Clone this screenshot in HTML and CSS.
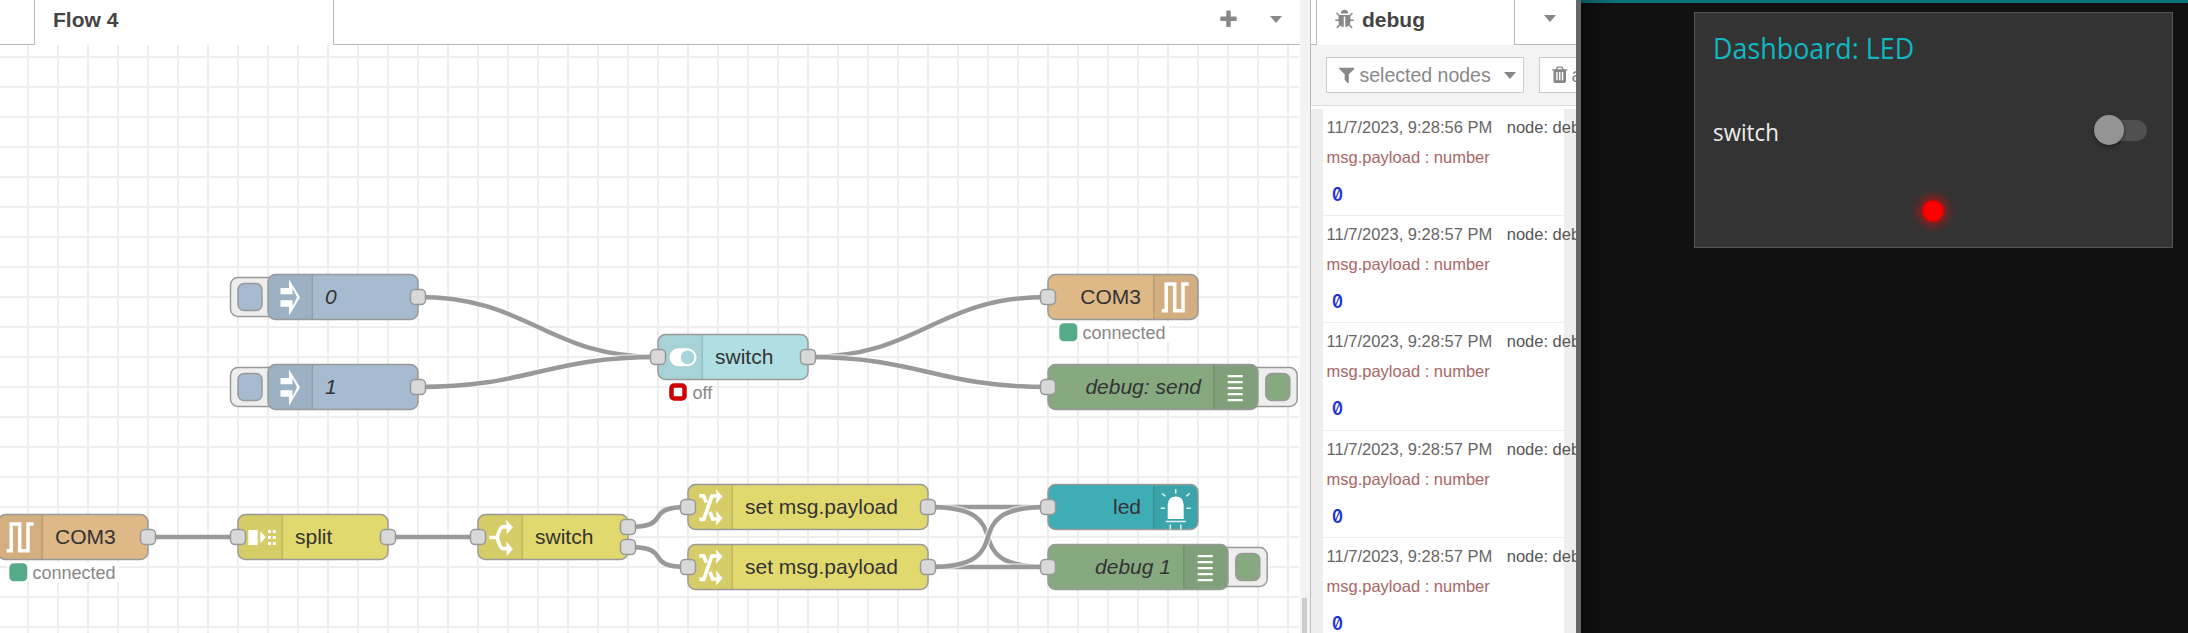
FILE: index.html
```html
<!DOCTYPE html>
<html lang="en">
<head>
<meta charset="utf-8">
<title>Flow 4</title>
<link rel="stylesheet" href="styles.css">
</head>
<body>
<div class="app">
  <main class="workspace">
    <div class="tabbar">
      <div class="tab-gap"></div>
      <div class="tab flow-tab">Flow 4</div>
      <div class="tab-tools">
        <svg class="fa plus" viewBox="0 0 1792 1792"><path d="M1600 736v192q0 40-28 68t-68 28h-416v416q0 40-28 68t-68 28h-192q-40 0-68-28t-28-68v-416h-416q-40 0-68-28t-28-68v-192q0-40 28-68t68-28h416v-416q0-40 28-68t68-28h192q40 0 68 28t28 68v416h416q40 0 68 28t28 68z"/></svg>
        <i class="caret"></i>
      </div>
    </div>
    <svg class="canvas" width="1299" height="588" viewBox="0 45 1299 588">
      <defs>
        <pattern id="grid" x="27" y="56" width="30" height="30" patternUnits="userSpaceOnUse">
          <path class="grid-line" d="M0 0H30V2H2V30H0Z"/>
        </pattern>
        <rect id="port" class="port" x="-7.5" y="-7.5" width="15" height="15" rx="4.5"/>
        <path id="i-inject" class="glyph" d="M12.5-9H21V-17.5L32 .3 21 18.7V9.7H12.5V3.3H24.5V9.5L29 .3 24.5-9V-2.7H12.5Z"/>
        <path id="i-serial" class="wave" d="M8.7 13.7H13.2V-13H21.7V13.7H30V-13H35.7"/>
        <path id="i-debug" class="glyph" d="M14.7-12h15v2.2h-15zM14.7-6h15v2.2h-15zM14.7 0h15v2.2h-15zM14.7 6h15v2.2h-15zM14.7 12h15v2.2h-15z"/>
        <path id="i-split" class="glyph" d="M10.3-7h9.4V8H10.3ZM22.3-5.7 27.9.3 22.3 6.3ZM30-7h3v3h-3zM34.8-7h3v3h-3zM30-1h3v3h-3zM34.8-1h3v3h-3zM30 5h3v3h-3zM34.8 5h3v3h-3z"/>
        <g id="i-switch">
          <path class="branch" d="M11.3 .5H19.2Q22-9.5 24.6-10.2H30M19.2 .5Q22 11 24.6 11.7H30"/>
          <path class="glyph" d="M27.8-17.6 35-9.8 28.4-2.6 29-10ZM27.8 4.2 35 11.9 28.4 19.2 29 11.7Z"/>
        </g>
        <g id="i-change">
          <path class="branch" d="M11.3 12.3H15.8L23.8-11H29M11.3-11.2H15.6L18.3-4.5M22 5 24.6 12H29"/>
          <path class="glyph" d="M27.8-17.8 34.6-10.6 27.8-3 28.8-10.6ZM27.8 3.4 34.6 11.2 27.8 18.8 28.8 11.2Z"/>
        </g>
        <g id="i-led">
          <path class="glyph" d="M14.7 12V-2Q15.2-10.4 22.7-10.4T30.7-2V12Z"/>
          <path class="ray" d="M12.8 14.6H32.8M17.3 17.5V22.4M27.8 17.5V22.4M22.7-18V-13.4M9-13.7 12.5-10.6M36.8-13.7 33.3-10.6M7.7 1.3H12M33.5 1.3H37.8"/>
        </g>
      </defs>
      <rect class="paper" x="0" y="45" width="1299" height="588"/>
      <rect x="0" y="45" width="1299" height="588" fill="url(#grid)"/>

      <g class="wires">
        <path class="halo" d="M418 297C530.5 297 545.5 357 658 357"/><path class="wire" d="M418 297C530.5 297 545.5 357 658 357"/>
        <path class="halo" d="M418 387C530.5 387 545.5 357 658 357"/><path class="wire" d="M418 387C530.5 387 545.5 357 658 357"/>
        <path class="halo" d="M808 357C920.5 357 935.5 297 1048 297"/><path class="wire" d="M808 357C920.5 357 935.5 297 1048 297"/>
        <path class="halo" d="M808 357C920.5 357 935.5 387 1048 387"/><path class="wire" d="M808 357C920.5 357 935.5 387 1048 387"/>
        <path class="wire" d="M148 537H238M388 537H478"/>
        <path class="wire" d="M628 527C675.4 527 640.6 507 688 507M628 547C675.4 547 640.6 567 688 567"/>
        <path class="wire" d="M928 507H1048"/>
        <path class="halo" d="M928 507C1028.6 507 947.4 567 1048 567"/><path class="wire" d="M928 507C1028.6 507 947.4 567 1048 567"/>
        <path class="halo" d="M928 567H1048"/><path class="wire" d="M928 567H1048"/>
        <path class="halo" d="M928 567C1028.6 567 947.4 507 1048 507"/><path class="wire" d="M928 567C1028.6 567 947.4 507 1048 507"/>
      </g>

      <g class="node inject" transform="translate(268 297)">
        <rect class="btn-frame" x="-37.5" y="-19.5" width="48" height="39" rx="7.5"/>
        <rect class="body" x="-30" y="-13.5" width="24" height="27" rx="6"/>
        <rect class="body" y="-22.5" width="150" height="45" rx="7.5"/>
        <path class="shade" d="M45-21.8H7.5Q.8-21.8.8-15V15Q.8 21.8 7.5 21.8H45Z"/><path class="divider" d="M44.3-21.8V21.8"/>
        <use href="#i-inject"/><text class="label italic" x="57" y="7">0</text>
        <use href="#port" x="150"/>
      </g>
      <g class="node inject" transform="translate(268 387)">
        <rect class="btn-frame" x="-37.5" y="-19.5" width="48" height="39" rx="7.5"/>
        <rect class="body" x="-30" y="-13.5" width="24" height="27" rx="6"/>
        <rect class="body" y="-22.5" width="150" height="45" rx="7.5"/>
        <path class="shade" d="M45-21.8H7.5Q.8-21.8.8-15V15Q.8 21.8 7.5 21.8H45Z"/><path class="divider" d="M44.3-21.8V21.8"/>
        <use href="#i-inject"/><text class="label italic" x="57" y="7">1</text>
        <use href="#port" x="150"/>
      </g>
      <g class="node ui-switch" transform="translate(658 357)">
        <rect class="body" y="-22.5" width="150" height="45" rx="7.5"/>
        <path class="shade" d="M45-21.8H7.5Q.8-21.8.8-15V15Q.8 21.8 7.5 21.8H45Z"/><path class="divider" d="M44.3-21.8V21.8"/>
        <rect class="glyph" x="11.5" y="-8.7" width="27" height="18" rx="9"/><circle class="knob" cx="29.6" cy=".4" r="6.8"/>
        <text class="label" x="57" y="7">switch</text>
        <use href="#port"/><use href="#port" x="150"/>
        <rect class="paper" x="9" y="25" width="46" height="20"/>
        <rect class="status-ring" x="13.5" y="28.5" width="13" height="13" rx="2.5"/>
        <text class="status" x="34.5" y="41.5">off</text>
      </g>
      <g class="node serial" transform="translate(1048 297)">
        <rect class="body" y="-22.5" width="150" height="45" rx="7.5"/>
        <path class="shade" d="M105-21.8H142.5Q149.2-21.8 149.2-15V15Q149.2 21.8 142.5 21.8H105Z"/><path class="divider" d="M105.8-21.8V21.8"/>
        <use href="#i-serial" x="105"/><text class="label end" x="93" y="7">COM3</text>
        <use href="#port"/>
        <rect class="paper" x="9" y="25" width="112" height="20"/>
        <rect class="status-dot" x="11.3" y="26.3" width="18" height="18" rx="4.5"/>
        <text class="status" x="34.5" y="41.5">connected</text>
      </g>
      <g class="node debug" transform="translate(1048 387)">
        <rect class="btn-frame" x="200" y="-19.5" width="49.2" height="39" rx="7.5"/>
        <rect class="body" x="217.8" y="-13.5" width="24" height="27" rx="6"/>
        <rect class="body" y="-22.5" width="210" height="45" rx="7.5"/>
        <path class="shade" d="M165-21.8H202.5Q209.2-21.8 209.2-15V15Q209.2 21.8 202.5 21.8H165Z"/><path class="divider" d="M165.8-21.8V21.8"/>
        <use href="#i-debug" x="165"/><text class="label italic end" x="153" y="7">debug: send</text>
        <use href="#port"/>
      </g>
      <g class="node serial" transform="translate(-2 537)">
        <rect class="body" y="-22.5" width="150" height="45" rx="7.5"/>
        <path class="shade" d="M45-21.8H7.5Q.8-21.8.8-15V15Q.8 21.8 7.5 21.8H45Z"/><path class="divider" d="M44.3-21.8V21.8"/>
        <use href="#i-serial"/><text class="label" x="57" y="7">COM3</text>
        <use href="#port" x="150"/>
        <rect class="paper" x="9" y="25" width="112" height="20"/>
        <rect class="status-dot" x="11.3" y="26.3" width="18" height="18" rx="4.5"/>
        <text class="status" x="34.5" y="41.5">connected</text>
      </g>
      <g class="node func" transform="translate(238 537)">
        <rect class="body" y="-22.5" width="150" height="45" rx="7.5"/>
        <path class="shade" d="M45-21.8H7.5Q.8-21.8.8-15V15Q.8 21.8 7.5 21.8H45Z"/><path class="divider" d="M44.3-21.8V21.8"/>
        <use href="#i-split"/><text class="label" x="57" y="7">split</text>
        <use href="#port"/><use href="#port" x="150"/>
      </g>
      <g class="node func" transform="translate(478 537)">
        <rect class="body" y="-22.5" width="150" height="45" rx="7.5"/>
        <path class="shade" d="M45-21.8H7.5Q.8-21.8.8-15V15Q.8 21.8 7.5 21.8H45Z"/><path class="divider" d="M44.3-21.8V21.8"/>
        <use href="#i-switch"/><text class="label" x="57" y="7">switch</text>
        <use href="#port"/><use href="#port" x="150" y="-10"/><use href="#port" x="150" y="10"/>
      </g>
      <g class="node func" transform="translate(688 507)">
        <rect class="body" y="-22.5" width="240" height="45" rx="7.5"/>
        <path class="shade" d="M45-21.8H7.5Q.8-21.8.8-15V15Q.8 21.8 7.5 21.8H45Z"/><path class="divider" d="M44.3-21.8V21.8"/>
        <use href="#i-change"/><text class="label" x="57" y="7">set msg.payload</text>
        <use href="#port"/><use href="#port" x="240"/>
      </g>
      <g class="node func" transform="translate(688 567)">
        <rect class="body" y="-22.5" width="240" height="45" rx="7.5"/>
        <path class="shade" d="M45-21.8H7.5Q.8-21.8.8-15V15Q.8 21.8 7.5 21.8H45Z"/><path class="divider" d="M44.3-21.8V21.8"/>
        <use href="#i-change"/><text class="label" x="57" y="7">set msg.payload</text>
        <use href="#port"/><use href="#port" x="240"/>
      </g>
      <g class="node led-node" transform="translate(1048 507)">
        <rect class="body" y="-22.5" width="150" height="45" rx="7.5"/>
        <path class="shade" d="M105-21.8H142.5Q149.2-21.8 149.2-15V15Q149.2 21.8 142.5 21.8H105Z"/><path class="divider" d="M105.8-21.8V21.8"/>
        <use href="#i-led" x="105"/><text class="label end" x="93" y="7">led</text>
        <use href="#port"/>
      </g>
      <g class="node debug" transform="translate(1048 567)">
        <rect class="btn-frame" x="170" y="-19.5" width="49.2" height="39" rx="7.5"/>
        <rect class="body" x="187.8" y="-13.5" width="24" height="27" rx="6"/>
        <rect class="body" y="-22.5" width="180" height="45" rx="7.5"/>
        <path class="shade" d="M135-21.8H172.5Q179.2-21.8 179.2-15V15Q179.2 21.8 172.5 21.8H135Z"/><path class="divider" d="M135.8-21.8V21.8"/>
        <use href="#i-debug" x="135"/><text class="label italic end" x="123" y="7">debug 1</text>
        <use href="#port"/>
      </g>
    </svg>
  </main>

  <div class="separator"><div class="thumb"></div></div>

  <aside class="sidebar">
    <div class="tabbar">
      <div class="side-gap"></div>
      <div class="tab side-tab">
        <svg class="fa bug" viewBox="0 0 1792 1792"><path d="M1696 960q0 26-19 45t-45 19h-224q0 171-67 290l208 209q19 19 19 45t-19 45q-18 19-45 19t-45-19l-198-197q-5 5-15 13t-42 28.500-65 36.500-82 29-97 13v-896h-128v896q-51 0-101.500-13.500t-87-33-66-39-43.500-32.500l-15-14-183 207q-20 21-48 21-24 0-43-16-19-18-20.500-44.500t15.500-46.500l202-227q-58-114-58-274h-224q-26 0-45-19t-19-45 19-45 45-19h224v-294l-173-173q-19-19-19-45t19-45 45-19 45 19l173 173h844l173-173q19-19 45-19t45 19 19 45-19 45l-173 173v294h224q26 0 45 19t19 45zm-480-576h-640q0-133 93.500-226.500t226.500-93.500 226.500 93.500 93.500 226.500z"/></svg>
        <span>debug</span>
      </div>
      <div class="side-tools"><i class="caret"></i></div>
    </div>
    <div class="toolbar">
      <div class="button filter">
        <svg class="fa small" viewBox="0 0 1792 1792"><path d="M1595 295q17 41-14 70l-493 493v742q0 42-39 59-13 5-25 5-27 0-45-19l-256-256q-19-19-19-45v-486l-493-493q-31-29-14-70 17-39 59-39h1280q42 0 59 39z"/></svg>
        <span class="filter-text">selected nodes</span>
        <i class="caret"></i>
      </div>
      <div class="button clear">
        <svg class="fa small" viewBox="0 0 1792 1792"><path d="M704 1376v-704q0-14-9-23t-23-9h-64q-14 0-23 9t-9 23v704q0 14 9 23t23 9h64q14 0 23-9t9-23zm256 0v-704q0-14-9-23t-23-9h-64q-14 0-23 9t-9 23v704q0 14 9 23t23 9h64q14 0 23-9t9-23zm256 0v-704q0-14-9-23t-23-9h-64q-14 0-23 9t-9 23v704q0 14 9 23t23 9h64q14 0 23-9t9-23zm-544-992h448l-48-117q-7-9-17-11h-317q-10 2-17 11zm928 32v64q0 14-9 23t-23 9h-96v948q0 83-47 143.500t-113 60.500h-832q-66 0-113-58.500t-47-141.500v-952h-96q-14 0-23-9t-9-23v-64q0-14 9-23t23-9h309l70-167q15-37 54-63t79-26h320q40 0 79 26t54 63l70 167h309q14 0 23 9t9 23z"/></svg>
        <span>a</span>
      </div>
    </div>
    <div class="messages">
      <div class="msg"><div class="meta"><span>11/7/2023, 9:28:56 PM</span><span class="src">node: deb</span></div><div class="topic">msg.payload : number</div><div class="value">0</div></div>
      <div class="msg"><div class="meta"><span>11/7/2023, 9:28:57 PM</span><span class="src">node: deb</span></div><div class="topic">msg.payload : number</div><div class="value">0</div></div>
      <div class="msg"><div class="meta"><span>11/7/2023, 9:28:57 PM</span><span class="src">node: deb</span></div><div class="topic">msg.payload : number</div><div class="value">0</div></div>
      <div class="msg"><div class="meta"><span>11/7/2023, 9:28:57 PM</span><span class="src">node: deb</span></div><div class="topic">msg.payload : number</div><div class="value">0</div></div>
      <div class="msg"><div class="meta"><span>11/7/2023, 9:28:57 PM</span><span class="src">node: deb</span></div><div class="topic">msg.payload : number</div><div class="value">0</div></div>
    </div>
  </aside>

  <section class="dashboard">
    <div class="topline"></div>
    <div class="card">
      <h1 class="title">Dashboard: LED</h1>
      <div class="row">
        <span class="row-label">switch</span>
        <div class="toggle"><div class="toggle-thumb"></div></div>
      </div>
      <div class="led"></div>
    </div>
  </section>
</div>
</body>
</html>
```
FILE: styles.css
```css
* { box-sizing: border-box; }
body { margin: 0; background: #fff; font-family: "Liberation Sans", Arial, sans-serif; overflow: hidden; }
.app { display: flex; width: 2188px; height: 633px; overflow: hidden; }

.workspace { width: 1300px; flex: none; }
.tabbar { display: flex; height: 45px; background: #fff; }
.tab { color: #444; font-weight: bold; font-size: 21px; line-height: 24px; border: solid #bbb; border-width: 0 1px; }
.tab-gap { width: 34px; border-bottom: 1px solid #bbb; }
.flow-tab { width: 300px; padding: 8px 0 0 18px; }
.tab-tools { flex: 1; display: flex; justify-content: flex-end; align-items: flex-start; gap: 31px; padding: 9px 18.5px 0 0; border-bottom: 1px solid #bbb; }
.fa { display: block; flex: none; fill: #888; width: 21px; height: 21px; }
.small { width: 19.5px; height: 19.5px; }
.caret { display: block; flex: none; width: 0; height: 0; border: solid transparent; border-width: 7px 6.5px 0; border-top-color: #888; }
.tab-tools .caret { margin-top: 7px; }

.canvas { display: block; }
.paper { fill: #fff; }
.grid-line { fill: #eee; }
.wire { fill: none; stroke: #999; stroke-width: 4.5; }
.halo { fill: none; stroke: #fff; stroke-width: 7.5; stroke-opacity: .6; }
.body { stroke: #999; stroke-width: 1.5; }
.inject .body { fill: #a6bbcf; }
.ui-switch .body { fill: #b0dfe3; }
.serial .body { fill: #deb887; }
.debug .body { fill: #87a980; }
.func .body { fill: #e2d96e; }
.led-node .body { fill: #3fadb5; }
.btn-frame { fill: #eee; stroke: #999; stroke-width: 1.5; }
.port { fill: #d9d9d9; stroke: #999; stroke-width: 1.5; }
.shade { fill: #000; fill-opacity: .05; }
.divider { stroke: #000; stroke-opacity: .1; stroke-width: 1.5; }
.glyph { fill: #fff; }
.knob { fill: #a7d4d8; }
.wave { fill: none; stroke: #fff; stroke-width: 3.5; }
.branch { fill: none; stroke: #fff; stroke-width: 3.7; }
.ray { fill: none; stroke: #fff; stroke-width: 1.5; stroke-opacity: .85; }
.label { font-size: 21px; fill: #333; }
.italic { font-style: italic; }
.end { text-anchor: end; }
.status { font-size: 18px; fill: #888; }
.status-dot { fill: #5a8; }
.status-ring { fill: #fff; stroke: #c00; stroke-width: 4.5; }

.separator { width: 10px; flex: none; background: #f3f3f3; padding: 598px 3px 0 2px; }
.thumb { height: 35px; background: #ccc; }

.sidebar { width: 266px; flex: none; height: 633px; border-left: 1px solid #bbb; overflow: hidden; background: #fff; }
.side-gap { width: 5px; border-bottom: 1px solid #bbb; }
.side-tab { width: 199px; display: flex; padding: 8px 0 0 17px; gap: 7px; }
.bug { margin-top: 1px; }
.side-tools { flex: 1; border-bottom: 1px solid #bbb; padding: 15px 0 0 29px; }
.toolbar { display: flex; gap: 15px; height: 61px; padding: 12px 0 0 15px; background: #f3f3f3; border-bottom: 1px solid #ddd; }
.button { flex: none; display: flex; align-items: center; height: 36px; background: #fff; border: 1px solid #ccc; font-size: 19.5px; color: #888; }
.filter { width: 198px; padding-left: 10px; }
.filter-text { width: 133px; margin: 0 10px 0 3px; white-space: nowrap; }
.filter .caret { margin-left: 1px; }
.clear { width: 70px; padding-left: 10px; gap: 2px; }
.messages { margin-top: 3px; padding-left: 12px; background: #eee; height: 524px; }
.msg { width: 241px; height: 107.2px; background: #fff; border-bottom: 1px solid #eee; padding: 8px 0 0 3.5px; font-size: 16.5px; line-height: 20px; white-space: nowrap; }
.meta { display: flex; gap: 14.5px; color: #666; }
.src { color: #555; }
.topic { margin-top: 10px; color: #a66; }
.value { margin: 18px 0 0 5.5px; font-family: Inter, sans-serif; font-size: 18px; font-weight: 600; font-feature-settings: "zero"; color: #2033d6; transform: scaleX(.92); transform-origin: left; }

.dashboard { flex: 1; border-left: 5px solid #666; background: linear-gradient(90deg, #0b0b0b, #111 36px); }
.topline { height: 3px; background: linear-gradient(90deg, #085459, #0a747b 36px); }
.card { width: 479px; height: 236px; margin: 9px 0 0 113px; background: #333; border: 1px solid #555; padding: 15px 25px 0 18px; }
.title { margin: 0; font: 400 29px/40px "Open Sans", "Noto Sans", sans-serif; color: #0eb8c0; white-space: nowrap; transform: scaleX(.927); transform-origin: left; }
.row { display: flex; justify-content: space-between; align-items: center; height: 36px; margin-top: 46px; }
.row-label { font: 400 24px/36px "Open Sans", "Noto Sans", sans-serif; color: #eee; margin-top: -1px; transform: scaleX(.93); transform-origin: left; }
.toggle { width: 50px; height: 21px; border-radius: 10.5px; background: #505050; margin-top: -4px; display: flex; align-items: center; }
.toggle-thumb { width: 30px; height: 30px; flex: none; margin-left: -3px; border-radius: 50%; background: #949494; box-shadow: 0 2px 4px rgba(0, 0, 0, .4); }
.led { width: 22px; height: 22px; margin: 50px 0 0 209px; border-radius: 50%; background: #f00; border: 1px solid #c80808; box-shadow: 0 0 12px 2px rgba(255, 0, 0, .75); }
```
